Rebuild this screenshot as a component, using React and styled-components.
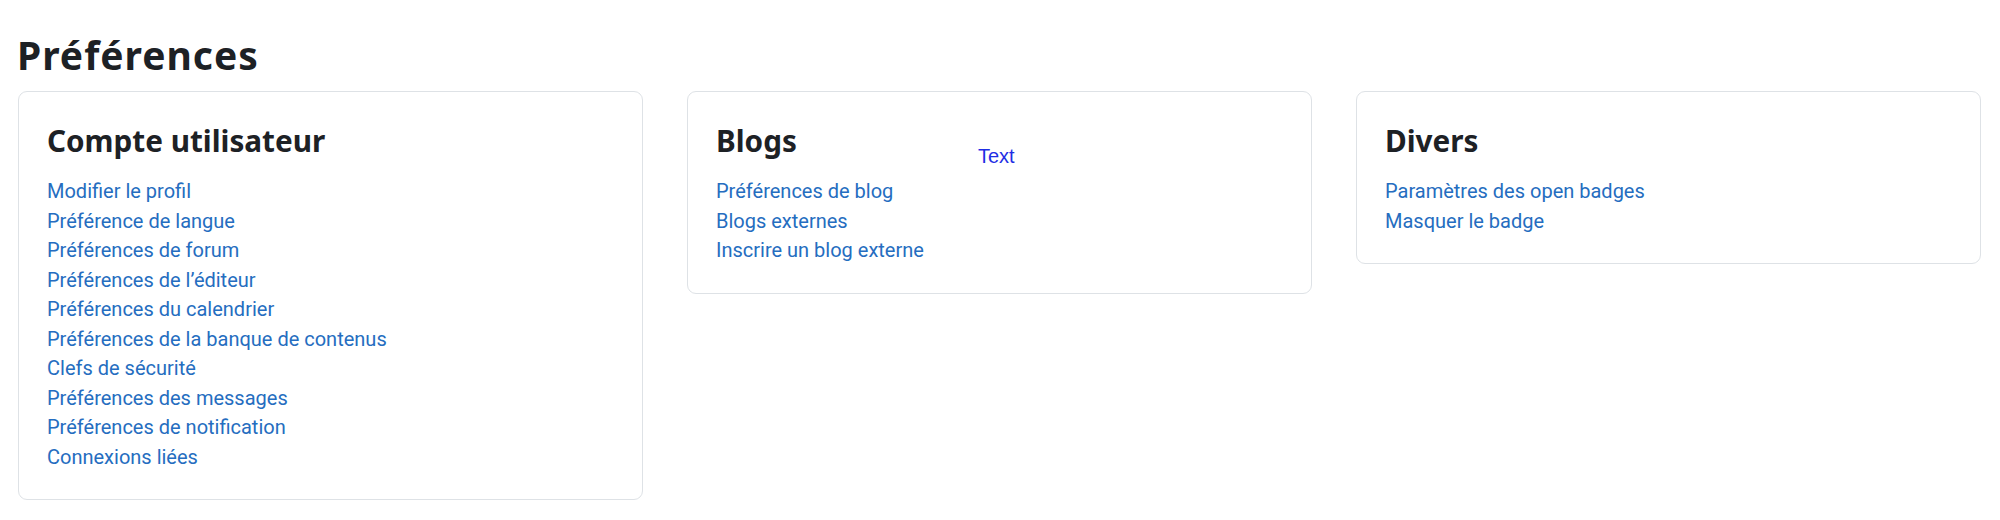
import React from "react";
import styled, { createGlobalStyle } from "styled-components";

const GlobalStyle = createGlobalStyle`
  body {
    margin: 0;
    background: #fff;
    font-family: Roboto, "Noto Sans", sans-serif;
    color: #1d2125;
  }
`;

const Page = styled.div`
  padding: 31px 19px 20px 18px;
`;

const Title = styled.h2`
  margin: 0 0 13px -1px;
  font-family: "Noto Sans", Roboto, sans-serif;
  font-size: 39px;
  line-height: 47px;
  font-weight: 700;
  letter-spacing: 1px;
  color: #1d2125;
`;

const Grid = styled.div`
  display: grid;
  grid-template-columns: repeat(3, 1fr);
  gap: 44px;
  align-items: start;
`;

const Card = styled.section`
  position: relative;
  border: 1px solid #dee2e6;
  border-radius: 9px;
  padding: 30px 28px 27px;
`;

const CardTitle = styled.h3`
  margin: 0 0 18px;
  font-family: "Noto Sans", Roboto, sans-serif;
  font-size: 29.7px;
  line-height: 37px;
  font-weight: 700;
  color: #1d2125;
`;

const LinkList = styled.ul`
  list-style: none;
  margin: 0;
  padding: 0;
`;

const Item = styled.li`
  font-size: 20px;
  line-height: 29.5px;
`;

const Link = styled.a`
  color: #256dc0;
  text-decoration: none;
`;

const Overlay = styled.span`
  position: absolute;
  left: 290px;
  top: 54px;
  font-family: "Liberation Sans", Arial, sans-serif;
  font-size: 20px;
  line-height: 20px;
  color: #1f2ee4;
`;

const sections = [
  {
    title: "Compte utilisateur",
    links: [
      "Modifier le profil",
      "Préférence de langue",
      "Préférences de forum",
      "Préférences de l’éditeur",
      "Préférences du calendrier",
      "Préférences de la banque de contenus",
      "Clefs de sécurité",
      "Préférences des messages",
      "Préférences de notification",
      "Connexions liées"
    ]
  },
  {
    title: "Blogs",
    links: ["Préférences de blog", "Blogs externes", "Inscrire un blog externe"],
    overlay: "Text"
  },
  {
    title: "Divers",
    links: ["Paramètres des open badges", "Masquer le badge"]
  }
];

export default function App() {
  return (
    <>
      <GlobalStyle />
      <Page>
        <Title>Préférences</Title>
        <Grid>
          {sections.map(s => (
            <Card key={s.title}>
              <CardTitle>{s.title}</CardTitle>
              <LinkList>
                {s.links.map(l => (
                  <Item key={l}>
                    <Link href="#">{l}</Link>
                  </Item>
                ))}
              </LinkList>
              {s.overlay && <Overlay>{s.overlay}</Overlay>}
            </Card>
          ))}
        </Grid>
      </Page>
    </>
  );
}
